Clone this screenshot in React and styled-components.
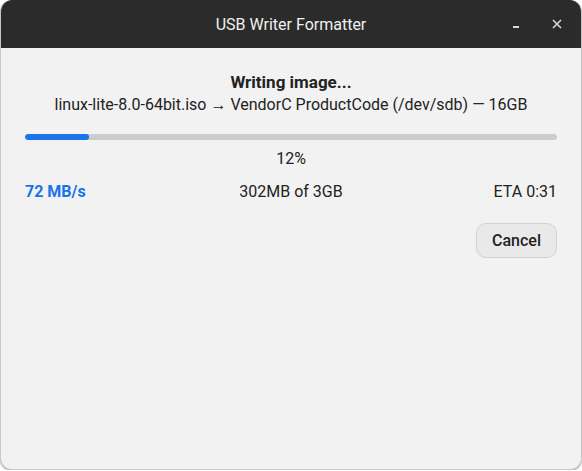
import React from "react";
import styled, { createGlobalStyle } from "styled-components";

const GlobalStyle = createGlobalStyle`
  html, body {
    margin: 0;
    padding: 0;
    background: #ffffff;
    font-family: Roboto, "Liberation Sans", sans-serif;
  }
`;

function App() {
  const percent = 12;
  return (
    <>
      <GlobalStyle />
      <Window>
        <TitleBar>
          <Title>USB Writer Formatter</Title>
          <Controls>
            <Minimize />
            <Close>
              <svg width="10" height="10" viewBox="0 0 10 10">
                <path d="M1 1L9 9M9 1L1 9" stroke="#d8d8d8" strokeWidth="1.6" />
              </svg>
            </Close>
          </Controls>
        </TitleBar>
        <Body>
          <Heading>Writing image...</Heading>
          <Subtitle>linux-lite-8.0-64bit.iso → VendorC ProductCode (/dev/sdb) — 16GB</Subtitle>
          <Track>
            <Fill style={{ width: `${percent}%` }} />
          </Track>
          <Percent>{percent}%</Percent>
          <Stats>
            <Speed>72 MB/s</Speed>
            <Stat align="center">302MB of 3GB</Stat>
            <Stat align="right">ETA 0:31</Stat>
          </Stats>
          <Actions>
            <Button>Cancel</Button>
          </Actions>
        </Body>
      </Window>
    </>
  );
}

const Window = styled.div`
  width: 582px;
  height: 470px;
  background: #f2f2f2;
  border: 1px solid #c8c8c8;
  border-top: none;
  border-radius: 12px;
  overflow: hidden;
  box-sizing: border-box;
  box-shadow: 0 1px 2px rgba(0, 0, 0, 0.35);
  display: flex;
  flex-direction: column;
`;

const TitleBar = styled.div`
  height: 48px;
  background: #2b2b2b;
  position: relative;
  display: flex;
  align-items: center;
  justify-content: center;
  flex-shrink: 0;
`;

const Title = styled.div`
  color: #f0f0f0;
  font-size: 16px;
`;

const Controls = styled.div`
  position: absolute;
  right: 19px;
  top: 0;
  height: 48px;
  display: flex;
  align-items: center;
  gap: 33px;
`;

const Minimize = styled.div`
  width: 6px;
  height: 2px;
  background: #d8d8d8;
  margin-top: 6px;
`;

const Close = styled.div`
  display: flex;
  align-items: center;
`;

const Body = styled.div`
  padding: 22px 24px 0 24px;
  display: flex;
  flex-direction: column;
  color: #222222;
`;

const Heading = styled.div`
  text-align: center;
  font-weight: bold;
  font-size: 17px;
  line-height: 24px;
`;

const Subtitle = styled.div`
  text-align: center;
  font-size: 16px;
  line-height: 22px;
`;

const Track = styled.div`
  margin-top: 18px;
  height: 6px;
  border-radius: 3px;
  background: #cccccc;
  overflow: hidden;
`;

const Fill = styled.div`
  height: 100%;
  background: #1a73e8;
  border-radius: 3px;
`;

const Percent = styled.div`
  text-align: center;
  font-size: 16px;
  line-height: 20px;
  margin-top: 9px;
`;

const Stats = styled.div`
  display: grid;
  grid-template-columns: 1fr 1fr 1fr;
  margin-top: 13px;
  font-size: 16px;
  line-height: 20px;
`;

const Stat = styled.div`
  text-align: ${(p) => p.align || "left"};
`;

const Speed = styled.div`
  color: #1a73e8;
  font-weight: bold;
`;

const Actions = styled.div`
  display: flex;
  justify-content: flex-end;
  margin-top: 21px;
`;

const Button = styled.button`
  font-family: Roboto, "Liberation Sans", sans-serif;
  font-size: 16px;
  font-weight: 500;
  color: #222222;
  background: #e9e9e9;
  border: 1px solid #d2d2d2;
  border-radius: 10px;
  padding: 0 15px;
  height: 35px;
`;

export default App;
